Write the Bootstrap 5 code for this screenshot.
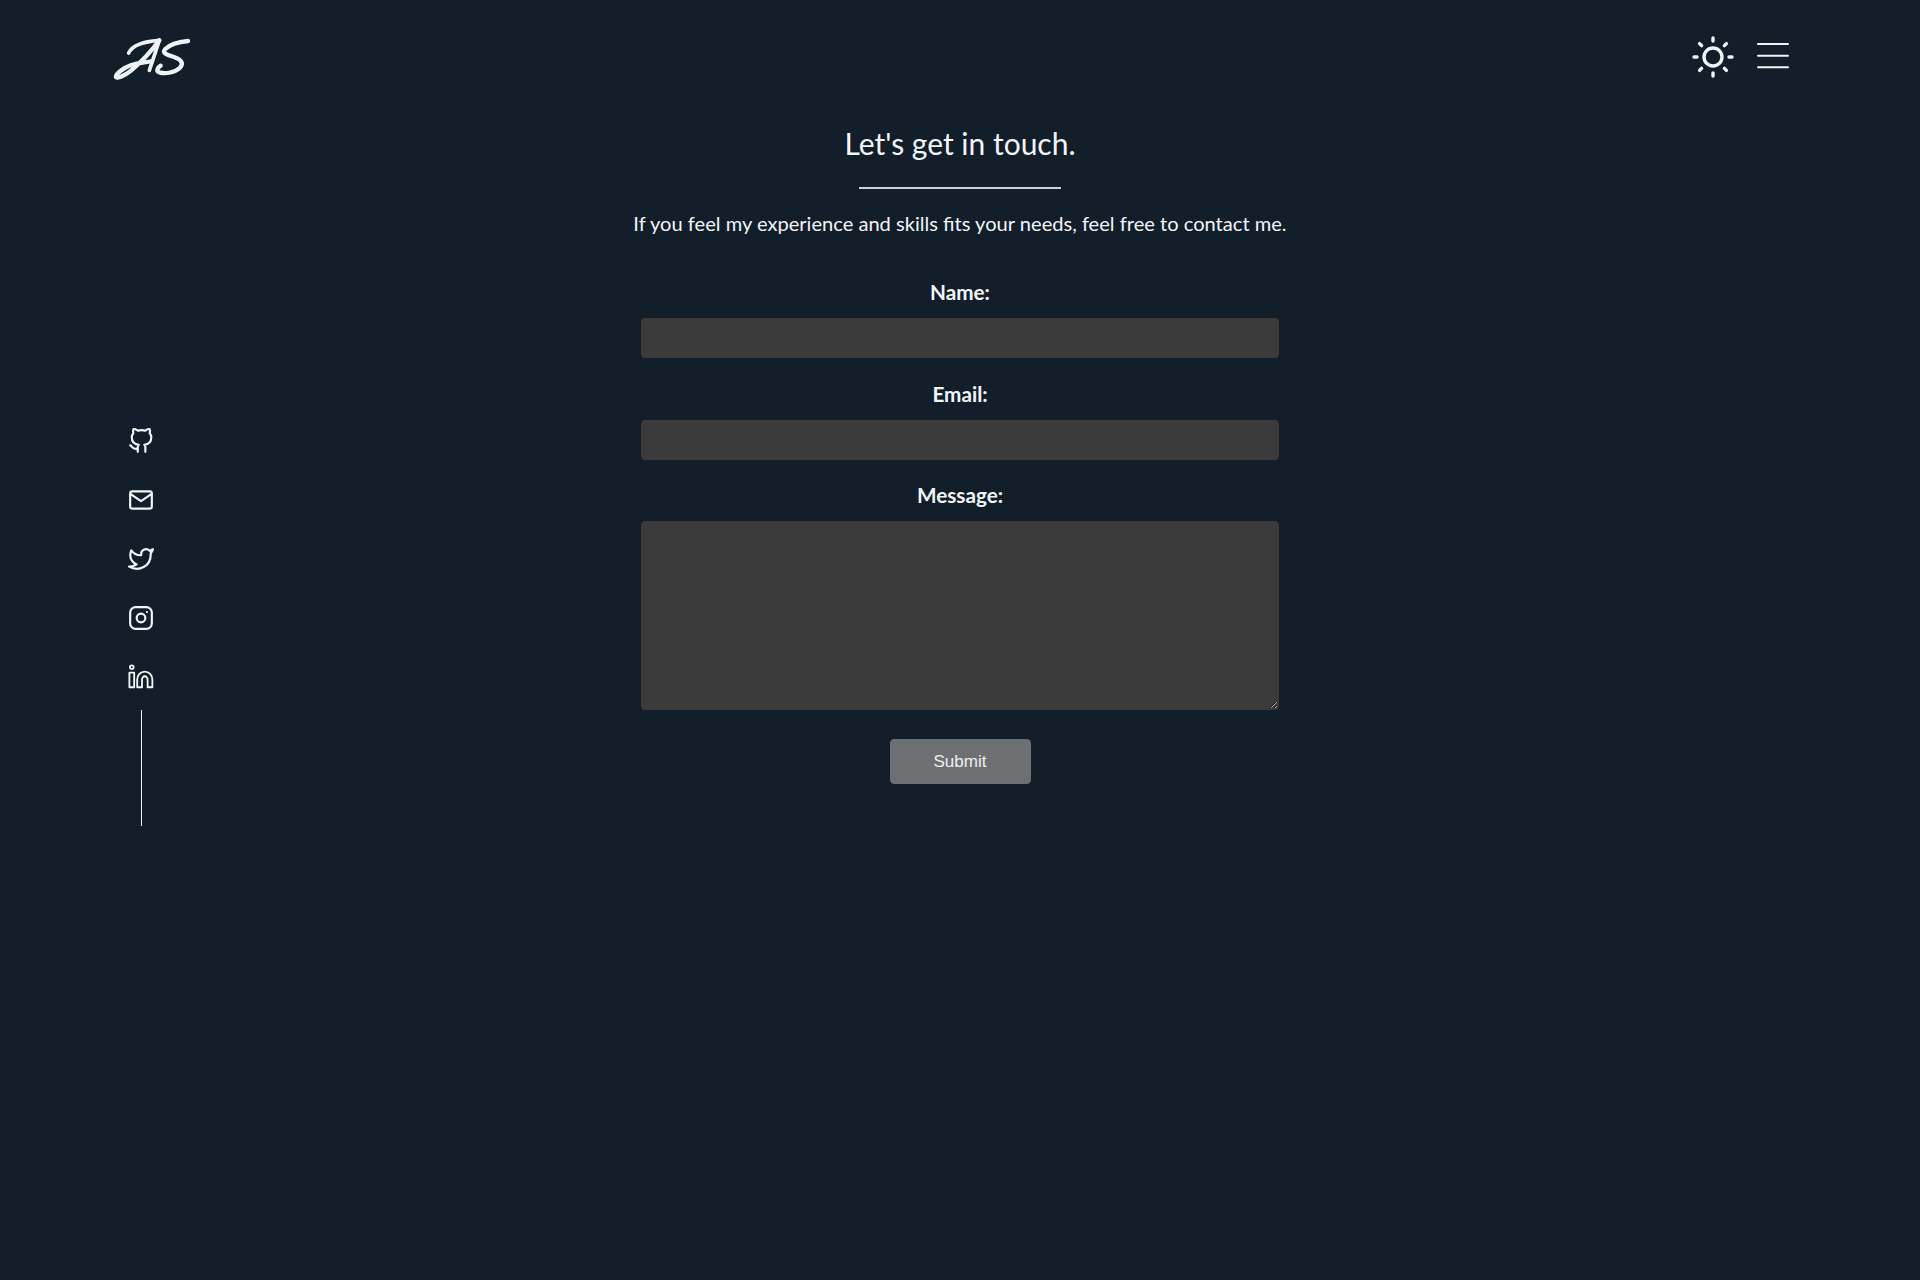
<!DOCTYPE html>
<html lang="en">

<head>
    <meta charset="UTF-8">
    <meta name="viewport" content="width=device-width, initial-scale=1.0">
    <title>Contact</title>
    <link href="https://cdn.jsdelivr.net/npm/bootstrap@5.3.3/dist/css/bootstrap.min.css" rel="stylesheet">
    <style>
        body {
            background: #121e2a;
            color: #f2f5f8;
            font-family: Lato, "Noto Sans", sans-serif;
            min-height: 1280px;
        }

        .site-head {
            height: 120px;
            padding: 35px 131px 0 110px;
        }

        .site-head svg {
            display: block;
        }

        .menu-icon {
            margin-left: 22px;
        }

        .side-col {
            flex: 1 1 0;
            padding: 0 0 0 128px;
        }

        .social-list {
            width: 26px;
            margin-top: 308px;
            gap: 33px;
        }

        .social-list svg {
            display: block;
        }

        .side-line {
            width: 1.5px;
            height: 116px;
            background: #f2f5f8;
            margin: 20px 0 0 12.5px;
        }

        .form-col {
            width: 654px;
        }

        .touch-title {
            font-size: 30px;
            font-weight: 400;
            line-height: 46px;
            margin: 0;
        }

        .touch-rule {
            width: 202px;
            height: 2px;
            background: #c9d6e2;
            margin: 21px auto 0;
        }

        .touch-text {
            font-size: 20.1px;
            line-height: 30px;
            margin: 19px 0 0;
        }

        .contact-form {
            width: 638px;
            margin: 39px auto 0;
        }

        .contact-form .form-label {
            display: block;
            font-size: 20.7px;
            font-weight: 700;
            line-height: 30px;
            margin: 0 0 11px;
        }

        .contact-form .form-control {
            background: #3b3b3b;
            border: 1px solid #3b3b3b;
            border-radius: 4px;
            color: #fff;
            height: 40px;
            margin-bottom: 20.5px;
        }

        .contact-form textarea.form-control {
            height: 189px;
            margin-bottom: 29px;
        }

        .send-btn {
            width: 141px;
            height: 45px;
            padding: 0;
            background: #6d7072;
            border: 1px solid #6d7072;
            border-radius: 4px;
            color: #eee;
            font-family: "Liberation Sans", Arial, sans-serif;
            font-size: 17px;
        }
    </style>
</head>

<body>
    <header class="site-head d-flex justify-content-between align-items-start">
        <a href="#" aria-label="AS">
            <svg width="84" height="48" viewBox="60 50 252 144" fill="none" stroke="#eef3f8" stroke-linecap="round" stroke-linejoin="round">
                <path stroke-width="11" d="M116 104c8-18 36-34 92-38"/>
                <path stroke-width="13" d="M208 66c-22 30-50 62-84 90-20 16-44 26-46 20-2-8 22-28 46-36 24-6 44-8 62-12"/>
                <path stroke-width="11" d="M208 66c-10 30-20 60-30 90"/>
                <path stroke-width="13" d="M294 68c-20 2-52 8-68 24-12 12 6 18 26 24 22 8 30 18 18 32-14 14-44 20-62 14-10-4-6-14 4-20"/>
            </svg>
        </a>
        <div class="d-flex align-items-start">
            <svg width="44" height="44" viewBox="0 0 44 44" fill="none" stroke="#f2f5f8" stroke-width="3.4" stroke-linecap="round">
                <circle cx="22" cy="22" r="9"/>
                <path d="M22 3v3M22 38v3M3 22h3M38 22h3M8.600 8.600l2 2M33.400 33.400l2 2M8.600 35.400l2-2M33.400 10.600l2-2"/>
            </svg>
            <svg class="menu-icon" width="32" height="44" viewBox="0 0 32 44" fill="none" stroke="#f2f5f8" stroke-width="2" stroke-linecap="round">
                <path d="M1 9h30M1 20.700h30M1 32.300h30"/>
            </svg>
        </div>
    </header>

    <div class="d-flex">
        <aside class="side-col">
            <div class="social-list d-flex flex-column">
                <svg width="26" height="26" viewBox="0 0 24 24" fill="none" stroke="#f2f5f8" stroke-width="2" stroke-linecap="round" stroke-linejoin="round"><path d="M9 19c-5 1.5-5-2.5-7-3m14 6v-3.870a3.370 3.370 0 0 0-.94-2.610c3.140-.35 6.440-1.540 6.440-7A5.440 5.440 0 0 0 20 4.770 5.070 5.070 0 0 0 19.910 1S18.730.65 16 2.480a13.380 13.380 0 0 0-7 0C6.270.65 5.090 1 5.090 1A5.070 5.070 0 0 0 5 4.770a5.440 5.440 0 0 0-1.500 3.780c0 5.420 3.300 6.610 6.440 7A3.370 3.370 0 0 0 9 18.130V22"/></svg>
                <svg width="26" height="26" viewBox="0 0 24 24" fill="none" stroke="#f2f5f8" stroke-width="2" stroke-linecap="round" stroke-linejoin="round"><rect x="2" y="4" width="20" height="16" rx="2"/><path d="M2.500 6.500 12 13l9.500-6.500"/></svg>
                <svg width="26" height="26" viewBox="0 0 24 24" fill="none" stroke="#f2f5f8" stroke-width="2" stroke-linecap="round" stroke-linejoin="round"><path d="M23 3a10.900 10.900 0 0 1-3 1.530 4.480 4.480 0 0 0-7.860 3v1A10.660 10.660 0 0 1 3 4s-4 9 5 13a11.640 11.640 0 0 1-7 2c9 5 20 0 20-11.500a4.500 4.500 0 0 0-.08-.83A7.720 7.720 0 0 0 23 3z"/></svg>
                <svg width="26" height="26" viewBox="0 0 24 24" fill="none" stroke="#f2f5f8" stroke-width="2" stroke-linecap="round" stroke-linejoin="round"><rect x="2" y="2" width="20" height="20" rx="5"/><circle cx="12" cy="12" r="4"/><path d="M17.500 6.500h.01"/></svg>
                <svg width="26" height="26" viewBox="0 0 24 24" fill="none" stroke="#f2f5f8" stroke-width="1.700" stroke-linecap="round" stroke-linejoin="round"><circle cx="3.500" cy="3" r="1.700"/><path d="M1.300 8h4.400v13.500H1.300zM8.500 21.500v-7a7 7.500 0 0 1 14 0v7h-4.400v-7a2.600 3.200 0 0 0-5.200 0v7z"/></svg>
            </div>
            <div class="side-line"></div>
        </aside>

        <main class="form-col text-center">
            <h1 class="touch-title">Let's get in touch.</h1>
            <div class="touch-rule"></div>
            <p class="touch-text">If you feel my experience and skills fits your needs, feel free to contact me.</p>
            <form class="contact-form" onsubmit="return false">
                <label class="form-label" for="nameInput">Name:</label>
                <input class="form-control" type="text" id="nameInput">
                <label class="form-label" for="emailInput">Email:</label>
                <input class="form-control" type="email" id="emailInput">
                <label class="form-label" for="messageInput">Message:</label>
                <textarea class="form-control" id="messageInput"></textarea>
                <button class="btn send-btn" type="submit">Submit</button>
            </form>
        </main>

        <div class="side-col"></div>
    </div>

    <script src="https://cdn.jsdelivr.net/npm/bootstrap@5.3.3/dist/js/bootstrap.bundle.min.js"></script>
</body>

</html>
